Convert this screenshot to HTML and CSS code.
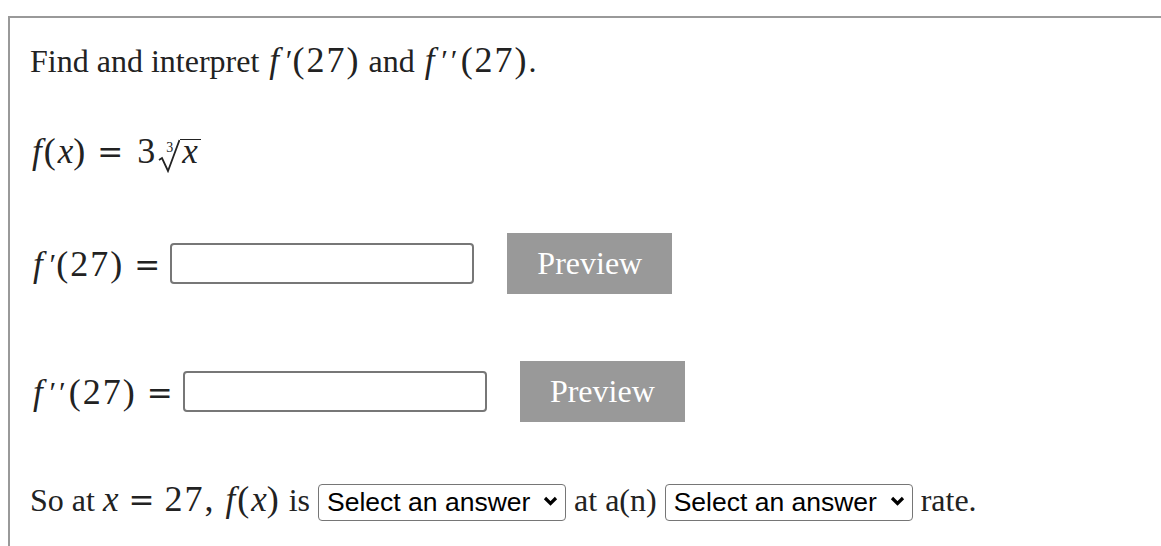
FILE: index.html
```html
<!DOCTYPE html>
<html>
<head>
<meta charset="utf-8">
<link rel="stylesheet" href="styles.css">
</head>
<body>
<div class="problem">
  <p class="line intro">Find and interpret <span class="m"><span class="mi mf">f</span><span class="pr">′</span>(27)</span> and <span class="m"><span class="mi mf">f</span><span class="pr pr2">′′</span>(27)</span>.</p>
  <p class="line func"><span class="m"><span class="mi mf">f</span>(<span class="mi">x</span>)<span class="eq eqf">=</span>3<span class="root"><span class="idx">3</span><svg class="radsvg" width="22" height="34" viewBox="0 0 22 34"><path d="M1 21 L4 19 L10 32 L21.5 1" fill="none" stroke="#222" stroke-width="1.8" stroke-linejoin="miter"/></svg><span class="rc mi">x</span></span></span></p>
  <div class="row row1">
    <span class="lbl m"><span class="mi mf">f</span><span class="pr">′</span>(27)<span class="eq">=</span></span>
    <input class="ans" type="text">
    <button class="preview">Preview</button>
  </div>
  <div class="row row2">
    <span class="lbl m"><span class="mi mf">f</span><span class="pr pr2">′′</span>(27)<span class="eq">=</span></span>
    <input class="ans" type="text">
    <button class="preview">Preview</button>
  </div>
  <div class="row row3">
    <span>So at <span class="m"><span class="mi">x</span><span class="eq">=</span>27,</span> <span class="m"><span class="mi mf">f</span>(<span class="mi">x</span>)</span> is</span>
    <span class="selwrap"><select class="sel"><option>Select an answer</option></select><svg class="chev" width="15" height="10" viewBox="0 0 15 10"><path d="M2 2 L7.5 7.5 L13 2" fill="none" stroke="#000" stroke-width="3.2"/></svg></span>
    <span>at a(n)</span>
    <span class="selwrap"><select class="sel"><option>Select an answer</option></select><svg class="chev" width="15" height="10" viewBox="0 0 15 10"><path d="M2 2 L7.5 7.5 L13 2" fill="none" stroke="#000" stroke-width="3.2"/></svg></span>
    <span>rate.</span>
  </div>
</div>
</body>
</html>
```
FILE: styles.css
```css
html, body {
  margin: 0;
  padding: 0;
  background: #fff;
}
body {
  font-family: "Liberation Serif", "Times New Roman", serif;
  font-size: 32px;
  color: #222;
}
.problem {
  box-sizing: border-box;
  margin: 16px 0 0 8px;
  border-top: 2px solid #999;
  border-left: 2px solid #999;
  padding: 24px 0 0 20px;
  height: 530px;
}
.line {
  margin: 0;
  line-height: 36px;
}
.func {
  margin-top: 54px;
}
.m {
  font-family: "Liberation Serif", serif;
  font-size: 36px;
  letter-spacing: 2px;
  color: #222;
}
.mi {
  font-family: "Liberation Serif", serif;
  font-style: italic;
  font-size: 35px;
  letter-spacing: 0;
}
.mf {
  margin: 0 2px 0 2px;
}
.pr {
  display: inline-block;
  font-family: "Liberation Serif", serif;
  font-style: italic;
  font-size: 30px;
  margin: 0 2px 0 3px;
  vertical-align: 2px;
  line-height: 1;
  letter-spacing: 0;
}
.pr2 {
  letter-spacing: 3px;
}
.eq {
  font-family: "DejaVu Serif", serif;
  font-size: 31px;
  margin: 0 10px;
  letter-spacing: 0;
}
.eqf {
  margin-right: 14px;
}
.root {
  display: inline-block;
  position: relative;
  margin-left: 1px;
  line-height: 24px;
}
.idx {
  font-family: "Liberation Serif", serif;
  font-size: 14px;
  line-height: 13px;
  position: absolute;
  left: 8px;
  top: 2px;
  font-style: normal;
}
.radsvg {
  display: inline-block;
  vertical-align: -10px;
}
.rc {
  display: inline-block;
  border-top: 1.5px solid #222;
  padding: 0 3px 0 2px;
  line-height: 24px;
}
.row {
  display: flex;
  align-items: center;
}
.row1 {
  margin-top: 60px;
  height: 61px;
}
.row2 {
  margin-top: 67px;
  height: 61px;
}
.row3 {
  margin-top: 56px;
  align-items: baseline;
  gap: 8px;
}
.lbl {
  margin-right: 10px;
  padding-left: 1px;
}
.lbl .eq {
  margin-right: 0;
}
.ans {
  box-sizing: border-box;
  width: 304px;
  height: 41px;
  border: 2px solid #777;
  border-radius: 4px;
  margin: 0;
  padding: 0 6px;
  font-size: 20px;
  background: #fff;
}
.preview {
  margin: 0 0 0 33px;
  width: 165px;
  height: 61px;
  border: none;
  background: #999;
  color: #fff;
  font-family: "Liberation Serif", "Times New Roman", serif;
  font-size: 32px;
  padding: 0;
}
.selwrap {
  position: relative;
  display: inline-block;
}
.sel {
  -webkit-appearance: none;
  appearance: none;
  box-sizing: border-box;
  font-family: "Liberation Sans", Arial, sans-serif;
  font-size: 26.5px;
  color: #000;
  height: 37px;
  width: 248px;
  border: 1px solid #767676;
  border-radius: 4px;
  background: #fff;
  padding: 0 30px 0 8px;
  margin: 0;
}
.chev {
  position: absolute;
  right: 8px;
  top: 14px;
  pointer-events: none;
}
```
